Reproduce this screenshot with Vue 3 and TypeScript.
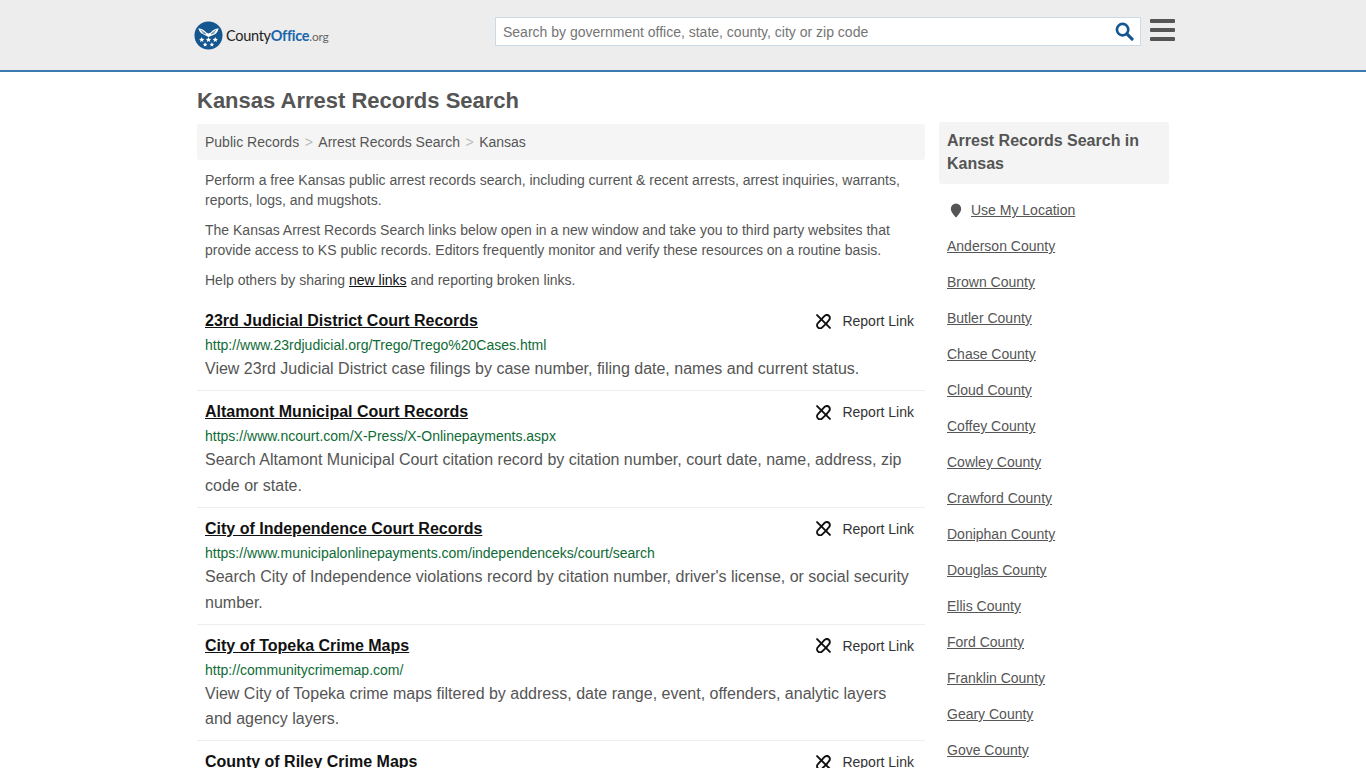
<script setup lang="ts">
interface LinkRow {
  title: string
  url: string
  desc: string
}

const links: LinkRow[] = [
  {
    title: '23rd Judicial District Court Records',
    url: 'http://www.23rdjudicial.org/Trego/Trego%20Cases.html',
    desc: 'View 23rd Judicial District case filings by case number, filing date, names and current status.',
  },
  {
    title: 'Altamont Municipal Court Records',
    url: 'https://www.ncourt.com/X-Press/X-Onlinepayments.aspx',
    desc: 'Search Altamont Municipal Court citation record by citation number, court date, name, address, zip code or state.',
  },
  {
    title: 'City of Independence Court Records',
    url: 'https://www.municipalonlinepayments.com/independenceks/court/search',
    desc: "Search City of Independence violations record by citation number, driver's license, or social security number.",
  },
  {
    title: 'City of Topeka Crime Maps',
    url: 'http://communitycrimemap.com/',
    desc: 'View City of Topeka crime maps filtered by address, date range, event, offenders, analytic layers and agency layers.',
  },
  {
    title: 'County of Riley Crime Maps',
    url: '',
    desc: '',
  },
]

const counties = [
  'Anderson', 'Brown', 'Butler', 'Chase', 'Cloud', 'Coffey', 'Cowley', 'Crawford',
  'Doniphan', 'Douglas', 'Ellis', 'Ford', 'Franklin', 'Geary', 'Gove',
]
</script>

<template>
  <div class="page">
    <header class="top">
      <div class="top-inner">
        <a class="logo" href="#">
          <svg class="logo-mark" viewBox="0 0 30 30" width="29" height="29">
            <circle cx="15" cy="15" r="14.500" fill="#14568f" />
            <path d="M4.500 7.500c3 .3 6 1.800 8.200 4.300l2.300 1.200 2.300-1.200c2.200-2.500 5.200-4 8.200-4.300-.6 3-2 5.300-4.300 6.500L15 16.500 10 14C6.800 12.800 5.100 10.500 4.500 7.500z" fill="#fff" />
            <path d="M7 9.500l5 3.500M23 9.500l-5 3.500M8.500 12l3.500 1.500M21.500 12L18 13.500" stroke="#14568f" stroke-width=".7" />
            <g fill="#fff">
              <path d="M8 16.500l.8 1.800 1.900.2-1.400 1.300.4 1.900-1.700-1-1.700 1 .4-1.900-1.400-1.300 1.900-.2z" />
              <path d="M15 16.500l.8 1.800 1.900.2-1.400 1.300.4 1.900-1.700-1-1.700 1 .4-1.900-1.400-1.300 1.900-.2z" />
              <path d="M22 16.500l.8 1.800 1.900.2-1.400 1.300.4 1.900-1.700-1-1.700 1 .4-1.900-1.400-1.300 1.900-.2z" />
              <path d="M11.500 22l.7 1.500 1.600.2-1.200 1.100.3 1.600-1.400-.8-1.400.8.300-1.600-1.200-1.100 1.600-.2z" />
              <path d="M18.500 22l.7 1.500 1.600.2-1.200 1.100.3 1.600-1.400-.8-1.400.8.300-1.600-1.200-1.100 1.600-.2z" />
            </g>
          </svg>
          <span class="logo-text">County<b>Office</b><small>.org</small></span>
        </a>
        <div class="search">
          <span class="search-ph">Search by government office, state, county, city or zip code</span>
          <svg class="search-icon" viewBox="0 0 20 20" width="19" height="19">
            <circle cx="8" cy="8" r="6" fill="none" stroke="#14568f" stroke-width="2.800" />
            <path d="M12.500 12.500l5.500 5.500" stroke="#14568f" stroke-width="3.200" stroke-linecap="round" />
          </svg>
        </div>
        <div class="burger"><i></i><i></i><i></i></div>
      </div>
    </header>

    <div class="wrap">
      <h1 class="title">Kansas Arrest Records Search</h1>
      <div class="columns">
        <main class="main">
          <nav class="crumbs">
            <span>Public Records</span><em>&gt;</em><span>Arrest Records Search</span><em>&gt;</em><span>Kansas</span>
          </nav>
          <div class="intro">
            <p>Perform a free Kansas public arrest records search, including current &amp; recent arrests, arrest inquiries, warrants, reports, logs, and mugshots.</p>
            <p>The Kansas Arrest Records Search links below open in a new window and take you to third party websites that provide access to KS public records. Editors frequently monitor and verify these resources on a routine basis.</p>
            <p>Help others by sharing <a href="#">new links</a> and reporting broken links.</p>
          </div>
          <article v-for="link in links" :key="link.title" class="row">
            <div class="row-head">
              <a class="row-title" href="#">{{ link.title }}</a>
              <span class="report">
                <svg viewBox="0 0 14 14" width="15" height="15" fill="none" stroke="#111" stroke-width="1.800" stroke-linecap="round">
                  <path d="M1 1l12 12" />
                  <path d="M5 5l3-3.200a2.800 2.800 0 0 1 4.200 3.800L9.500 9" />
                  <path d="M5 5L1.800 8.500a2.800 2.800 0 0 0 4 4L9.500 9" />
                </svg>
                Report Link
              </span>
            </div>
            <div v-if="link.url" class="row-url">{{ link.url }}</div>
            <p v-if="link.desc" class="row-desc">{{ link.desc }}</p>
          </article>
        </main>

        <aside class="side">
          <h2 class="side-title">Arrest Records Search in Kansas</h2>
          <a class="side-link locate" href="#">
            <svg viewBox="0 0 12 16" width="12" height="15">
              <path d="M6 0.500a5.500 5.500 0 0 1 5.500 5.500c0 3.500-3.500 7-5.500 9.500C4 13 0.500 9.500 0.500 6A5.500 5.500 0 0 1 6 0.500z" fill="#555" />
            </svg>
            <span>Use My Location</span>
          </a>
          <a v-for="name in counties" :key="name" class="side-link" href="#"><span>{{ name }} County</span></a>
        </aside>
      </div>
    </div>
  </div>
</template>

<style scoped>
.page {
  height: 768px;
  overflow: hidden;
  font-family: "Liberation Sans", Arial, sans-serif;
  color: #555;
  background: #fff;
}
.top {
  height: 70px;
  background: #ededed;
  border-bottom: 2px solid #3a7ab0;
}
.top-inner {
  width: 982px;
  margin-left: 194px;
  display: flex;
  align-items: flex-start;
}
.logo {
  display: flex;
  align-items: center;
  width: 301px;
  height: 29px;
  margin-top: 21px;
  text-decoration: none;
}
.logo-mark {
  flex: none;
}
.logo-text {
  margin-left: 3px;
  font-family: "Lato", sans-serif;
  font-size: 14.500px;
  letter-spacing: -0.3px;
  color: #222;
}
.logo-text b {
  font-weight: 700;
  color: #1a66ad;
}
.logo-text small {
  font-size: 12px;
  color: #666;
  letter-spacing: -0.2px;
}
.search {
  box-sizing: border-box;
  width: 646px;
  height: 29px;
  margin-top: 17px;
  background: #fff;
  border: 1px solid #ccdae6;
  display: flex;
  align-items: center;
  justify-content: space-between;
  padding: 0 6px 0 7px;
}
.search-ph {
  font-size: 14px;
  color: #757575;
}
.burger {
  margin: 19px 0 0 9px;
  width: 25px;
  display: flex;
  flex-direction: column;
  gap: 5px;
}
.burger i {
  display: block;
  height: 4px;
  border-radius: 1px;
  background: #555;
}
.wrap {
  width: 972px;
  margin-left: 197px;
}
.title {
  margin: 0;
  padding-top: 16px;
  height: 36px;
  font-size: 22px;
  line-height: 25px;
  font-weight: 700;
  color: #555;
}
.columns {
  display: flex;
  gap: 14px;
  align-items: flex-start;
}
.main {
  width: 728px;
  flex: none;
}
.crumbs {
  height: 36px;
  padding: 0 8px;
  background: #f5f5f5;
  border-radius: 3px;
  display: flex;
  align-items: center;
  font-size: 14px;
  color: #555;
}
.crumbs em {
  font-style: normal;
  color: #bbb;
  margin: 0 5.500px;
}
.intro {
  padding: 10px 8px 0.200px;
  font-size: 14px;
  line-height: 20px;
}
.intro p {
  margin: 0 0 10px;
}
.intro a {
  color: #111;
  text-decoration: underline;
}
.row {
  padding: 8px 11px 8.300px 8px;
  border-bottom: 1px solid #eee;
}
.row-head {
  display: flex;
  justify-content: space-between;
  align-items: center;
  height: 26px;
}
.row-title {
  font-size: 16px;
  font-weight: 700;
  color: #111;
  text-decoration: underline;
}
.report {
  display: flex;
  align-items: center;
  gap: 11px;
  font-size: 14px;
  color: #333;
}
.row-url {
  margin-top: 2px;
  font-size: 14px;
  line-height: 19px;
  color: #0e6b35;
}
.row-desc {
  margin: 1px 0 0;
  font-size: 16px;
  line-height: 25.700px;
  color: #555;
}
.side {
  width: 230px;
  flex: none;
  margin-top: -2px;
  font-size: 14px;
}
.side-title {
  margin: 0 0 8px;
  padding: 7px 8px 9px;
  background: #f4f4f4;
  border-radius: 3px;
  font-size: 16px;
  line-height: 23px;
  font-weight: 700;
  color: #555;
}
.side-link {
  display: flex;
  align-items: center;
  height: 36px;
  padding-left: 8px;
  color: #555;
  text-decoration: none;
}
.side-link span {
  text-decoration: underline;
}
.locate {
  padding-left: 11px;
  gap: 9px;
}
</style>

<style>
html, body {
  margin: 0;
  overflow: hidden;
}
</style>
